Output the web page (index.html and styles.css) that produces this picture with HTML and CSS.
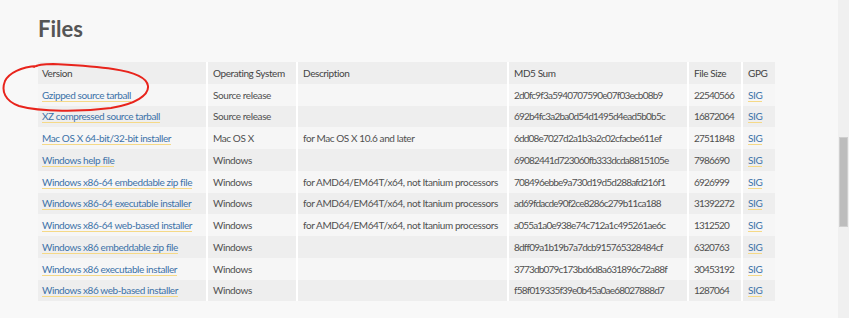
FILE: index.html
```html
<!DOCTYPE html>
<html>
<head>
<meta charset="utf-8">
<link rel="stylesheet" href="styles.css">
</head>
<body>
<div class="page">
  <main class="content">
    <h1 class="title">Files</h1>
    <div class="table-wrap">
      <table class="files">
        <thead>
          <tr><th class="c-ver">Version</th><th class="c-os">Operating System</th><th class="c-desc">Description</th><th class="c-md5">MD5 Sum</th><th class="c-size">File Size</th><th class="c-gpg">GPG</th></tr>
        </thead>
        <tbody>
          <tr><td><a href="#">Gzipped source tarball</a></td><td>Source release</td><td></td><td class="num">2d0fc9f3a5940707590e07f03ecb08b9</td><td class="num">22540566</td><td><a href="#">SIG</a></td></tr>
          <tr><td><a href="#">XZ compressed source tarball</a></td><td>Source release</td><td></td><td class="num">692b4fc3a2ba0d54d1495d4ead5b0b5c</td><td class="num">16872064</td><td><a href="#">SIG</a></td></tr>
          <tr><td><a href="#">Mac OS X 64-bit/32-bit installer</a></td><td>Mac OS X</td><td>for Mac OS X 10.6 and later</td><td class="num">6dd08e7027d2a1b3a2c02cfacbe611ef</td><td class="num">27511848</td><td><a href="#">SIG</a></td></tr>
          <tr><td><a href="#">Windows help file</a></td><td>Windows</td><td></td><td class="num">69082441d723060fb333dcda8815105e</td><td class="num">7986690</td><td><a href="#">SIG</a></td></tr>
          <tr><td><a href="#">Windows x86-64 embeddable zip file</a></td><td>Windows</td><td>for AMD64/EM64T/x64, not Itanium processors</td><td class="num">708496ebbe9a730d19d5d288afd216f1</td><td class="num">6926999</td><td><a href="#">SIG</a></td></tr>
          <tr><td><a href="#">Windows x86-64 executable installer</a></td><td>Windows</td><td>for AMD64/EM64T/x64, not Itanium processors</td><td class="num">ad69fdacde90f2ce8286c279b11ca188</td><td class="num">31392272</td><td><a href="#">SIG</a></td></tr>
          <tr><td><a href="#">Windows x86-64 web-based installer</a></td><td>Windows</td><td>for AMD64/EM64T/x64, not Itanium processors</td><td class="num">a055a1a0e938e74c712a1c495261ae6c</td><td class="num">1312520</td><td><a href="#">SIG</a></td></tr>
          <tr><td><a href="#">Windows x86 embeddable zip file</a></td><td>Windows</td><td></td><td class="num">8dff09a1b19b7a7dcb915765328484cf</td><td class="num">6320763</td><td><a href="#">SIG</a></td></tr>
          <tr><td><a href="#">Windows x86 executable installer</a></td><td>Windows</td><td></td><td class="num">3773db079c173bd6d8a631896c72a88f</td><td class="num">30453192</td><td><a href="#">SIG</a></td></tr>
          <tr><td><a href="#">Windows x86 web-based installer</a></td><td>Windows</td><td></td><td class="num">f58f019335f39e0b45a0ae68027888d7</td><td class="num">1287064</td><td><a href="#">SIG</a></td></tr>
        </tbody>
      </table>
      <svg class="annotation" width="160" height="52" viewBox="0 0 160 52">
        <path d="M36 3 C20 4 8 10 4 18 C0 28 4 38 18 43 C40 49 80 49 110 45 C135 41 148 32 147 23 C146 14 132 9 112 6 C92 3 70 2 52 1 C42 1 36 2 33 4" fill="none" stroke="#e8241c" stroke-width="2" stroke-linecap="round"/>
      </svg>
    </div>
  </main>
  <aside class="scrollbar"><div class="thumb"></div></aside>
</div>
</body>
</html>
```
FILE: styles.css
```css
* { box-sizing: border-box; }
html, body { margin: 0; padding: 0; height: 100%; }
body {
  background: #f8f8f8;
  font-family: "Lato", "Open Sans", sans-serif;
  color: #555;
  overflow: hidden;
}
.page {
  display: flex;
  height: 318px;
}
.content {
  flex: 1;
  padding: 16px 0 0 38px;
}
.title {
  margin: 0 0 20px 0;
  font-size: 22px;
  line-height: 26px;
  font-weight: 700;
  color: #555;
}
.table-wrap {
  position: relative;
}
.files {
  border-collapse: separate;
  border-spacing: 0;
  font-size: 10px;
  letter-spacing: -0.4px;
  table-layout: fixed;
  width: 737px;
}
.files th, .files td {
  height: 21.75px;
  padding: 0 0 0 4px;
  text-align: left;
  white-space: nowrap;
  overflow: hidden;
  border-right: 2px solid #fff;
  vertical-align: middle;
}
.files th:last-child, .files td:last-child { border-right: 0; }
.files th { font-weight: 400; color: #444; background: #eeeeee; }
.files tbody tr:nth-child(odd) td { background: #f6f6f6; }
.files tbody tr:nth-child(even) td { background: #eeeeee; }
.files td { color: #505050; }
.files td:not(:first-child), .files th:not(:first-child) { padding-left: 5px; }
.files td.num { letter-spacing: -0.8px; }
.c-ver { width: 170px; }
.c-os { width: 90px; }
.c-desc { width: 211px; }
.c-md5 { width: 180px; }
.c-size { width: 54px; }
.c-gpg { width: 32px; }
.files a {
  color: #3c72a8;
  text-decoration: none;
  border-bottom: 1px solid #f5d987;
}
.annotation {
  position: absolute;
  left: -37px;
  top: 1px;
}
.scrollbar {
  width: 11px;
  background: #f0f0f0;
  padding: 137px 1px 0 1px;
}
.thumb {
  height: 90px;
  background: #bdbdbd;
  border: 1px solid #cfcfcf;
}
```
